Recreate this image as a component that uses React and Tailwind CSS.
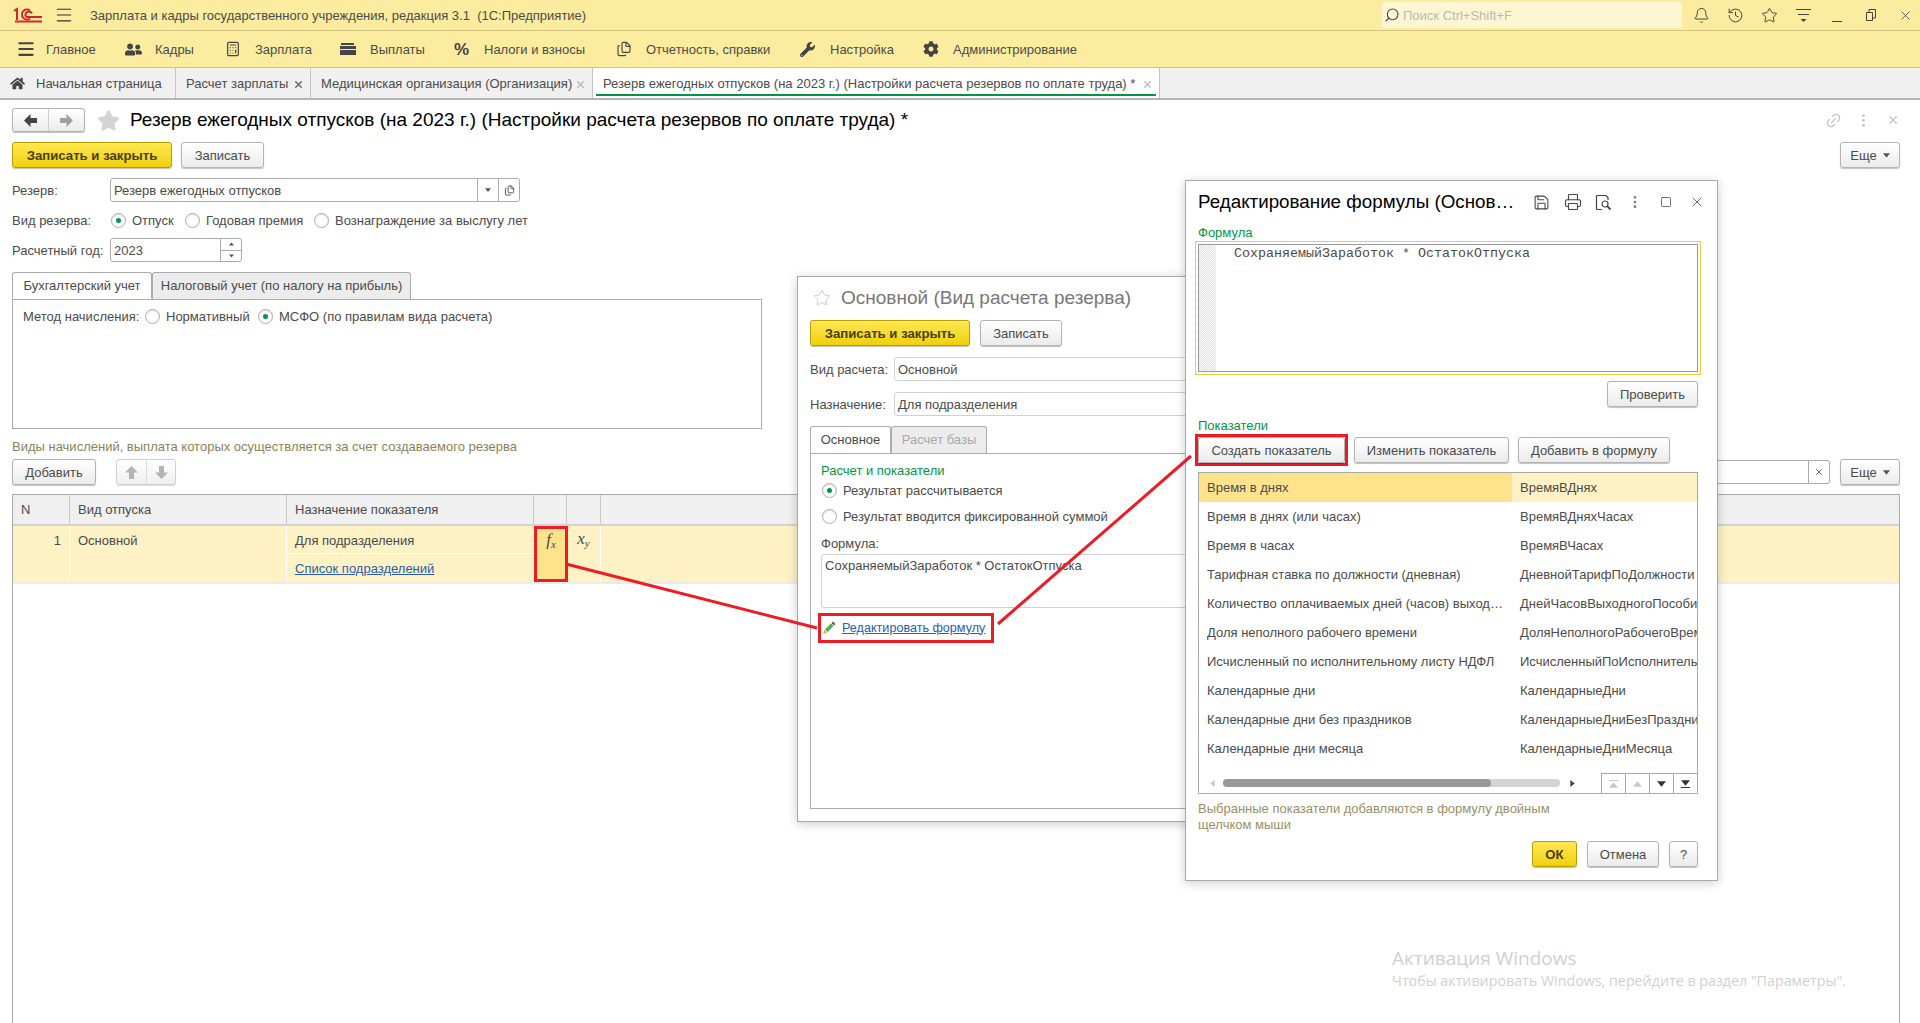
import React from 'react';
import {
    Bell, Calculator, Files, History, Link2, Menu, MoreVertical, Printer, Save, Search, Square, Star, X,
} from 'lucide-react';
import { FaCog, FaHome, FaStar, FaUserFriends, FaWrench } from 'react-icons/fa';

const navItems = [
    { label: 'Главное', width: 'w-[109px]', icon: <Menu size={20} strokeWidth={2.5} /> },
    { label: 'Кадры', width: 'w-[100px]', icon: <FaUserFriends size={17} /> },
    { label: 'Зарплата', width: 'w-[115px]', icon: <Calculator size={16} strokeWidth={1.8} /> },
    { label: 'Выплаты', width: 'w-[114px]', icon: <WalletIcon /> },
    { label: 'Налоги и взносы', width: 'w-[162px]', icon: <span className="text-[17px] font-bold leading-none">%</span> },
    { label: 'Отчетность, справки', width: 'w-[184px]', icon: <Files size={16} strokeWidth={1.7} /> },
    { label: 'Настройка', width: 'w-[123px]', icon: <FaWrench size={15} /> },
    { label: 'Администрирование', width: 'w-[160px]', icon: <FaCog size={16} /> },
];

const indicators = [
    ['Время в днях', 'ВремяВДнях'],
    ['Время в днях (или часах)', 'ВремяВДняхЧасах'],
    ['Время в часах', 'ВремяВЧасах'],
    ['Тарифная ставка по должности (дневная)', 'ДневнойТарифПоДолжности'],
    ['Количество оплачиваемых дней (часов) выходного пособия', 'ДнейЧасовВыходногоПособия'],
    ['Доля неполного рабочего времени', 'ДоляНеполногоРабочегоВремени'],
    ['Исчисленный по исполнительному листу НДФЛ', 'ИсчисленныйПоИсполнительномуЛисту'],
    ['Календарные дни', 'КалендарныеДни'],
    ['Календарные дни без праздников', 'КалендарныеДниБезПраздников'],
    ['Календарные дни месяца', 'КалендарныеДниМесяца'],
    ['Календарные дни года', 'КалендарныеДниГода'],
];

function WalletIcon() {
    return (
        <svg width="16" height="14" viewBox="0 0 16 14" fill="currentColor">
            <path d="M1 1h13v2H1zM0 4h16v3H0zM0 8h16v5H0z" />
        </svg>
    );
}

function Logo() {
    return (
        <svg width="30" height="16" viewBox="0 0 30 16" fill="none" stroke="#d8232a" strokeWidth="2">
            <path d="M1 4 L4 2 V13" />
            <path d="M17 3.5 A5 5 0 1 0 17 11.5" />
            <path d="M19 6.5 A3.5 3.5 0 0 0 13 6 A2.5 2.5 0 0 0 14 10 H29" />
            <path d="M2 14.5 H29" />
        </svg>
    );
}

function Pencil() {
    return (
        <svg width="14" height="14" viewBox="0 0 14 14">
            <path d="M3 8.5 L9 2.5 L11.5 5 L5.5 11 Z" fill="#4caf50" />
            <path d="M9.5 2 L11 0.5 L13.5 3 L12 4.5 Z" fill="#4a5a50" />
            <path d="M2.5 9 L5 11.5 L1 13 Z" fill="#e8a33d" />
        </svg>
    );
}

// жирная стрелка, как на кнопках 1С
function FatArrow({ dir, className }) {
    const rotate = { up: '', down: 'rotate-180', left: '-rotate-90', right: 'rotate-90' }[dir];
    return (
        <svg width="13" height="13" viewBox="0 0 13 13" fill="currentColor" className={`${rotate} ${className}`}>
            <path d="M6.5 0 L13 6.5 H9 V13 H4 V6.5 H0 Z" />
        </svg>
    );
}

function PreviewIcon() {
    return (
        <svg width="17" height="17" viewBox="0 0 17 17" fill="none" stroke="currentColor" strokeWidth="1.2">
            <path d="M7 15.5 H2.5 Q1.5 15.5 1.5 14.5 V2.5 Q1.5 1.5 2.5 1.5 H11 L13 3.5 V6" />
            <circle cx="10" cy="10" r="3" />
            <path d="M12.2 12.2 L15.5 15.5" strokeWidth="1.8" />
        </svg>
    );
}

function Caret({ up, className = 'text-[#555]', size = 7 }) {
    return (
        <svg width={size} height={Math.ceil(size / 2) + 1} viewBox="0 0 8 5" fill="currentColor" className={className}>
            <path d={up ? 'M0 5 L4 0 L8 5 Z' : 'M0 0 L8 0 L4 5 Z'} />
        </svg>
    );
}

function Btn({ children, w, primary }) {
    const look = primary
        ? 'bg-linear-to-b from-[#ffe84d] to-[#f0d000] border-[#b8a000] text-[#4a4000] font-bold text-[13.2px]'
        : 'bg-linear-to-b from-white to-[#ebebeb] border-[#b3b3b3] text-[#4b4b4b]';
    return (
        <div className={`${w} ${look} h-[26px] pt-px shrink-0 flex items-center justify-center rounded-[3px] border shadow-[0_1px_1px_rgba(0,0,0,0.25)]`}>
            {children}
        </div>
    );
}

function More() {
    return (
        <Btn w="w-[60px]">
            <span className="mr-1.5">Еще</span>
            <Caret />
        </Btn>
    );
}

function Radio({ on, label, className = '' }) {
    return (
        <div className={`flex items-center ${className}`}>
            <span className="w-[15px] h-[15px] shrink-0 rounded-full border border-[#ababab] bg-white flex items-center justify-center shadow-[inset_0_1px_1px_rgba(0,0,0,0.12)]">
                {on && <span className="w-[5px] h-[5px] rounded-full bg-[#009646]" />}
            </span>
            <span className="ml-1.5 pt-px whitespace-nowrap">{label}</span>
        </div>
    );
}

function TabHead({ active, children, w, muted }) {
    return (
        <div className={`${w} h-[27px] flex items-center justify-center rounded-t-[3px] border border-[#ababab] whitespace-nowrap ${active ? 'bg-white border-b-white -mb-px z-10' : 'bg-[#ececec] border-b-0'} ${muted ? 'text-[#a8a8a8]' : ''}`}>
            {children}
        </div>
    );
}

function TopTab({ w, children, close, active, icon }) {
    return (
        <div className={`${w} relative h-full pt-px flex items-center border-r border-[#c4c4c4] whitespace-nowrap ${active ? 'bg-white' : ''}`}>
            {icon}
            {children}
            {close && <X size={11} strokeWidth={3} className={`absolute right-[6px] top-[11px] ${close}`} />}
            {active && <div className="absolute left-[3px] right-[3px] bottom-[2px] h-[2px] bg-[#009646]" />}
        </div>
    );
}

function ReserveTable() {
    return (
        <div className="mt-[9px] flex-1 border border-b-0 border-[#a9a9a9]">
            <div className="grid grid-cols-[57px_217px_247px_33px_34px_1fr] h-[31px] bg-[#f0f0f0] border-b-2 border-[#d2d2d2]">
                <div className="px-2 flex items-center border-r border-[#c8c8c8]">N</div>
                <div className="px-2 flex items-center border-r border-[#c8c8c8]">Вид отпуска</div>
                <div className="px-2 flex items-center border-r border-[#c8c8c8]">Назначение показателя</div>
                <div className="border-r border-[#c8c8c8]" />
                <div className="border-r border-[#c8c8c8]" />
                <div />
            </div>
            <div className="grid grid-cols-[57px_217px_247px_33px_34px_1fr] h-[58px] bg-[#fef2c5] border-b-2 border-[#ebebeb]">
                <div className="pt-[5px] pr-[8px] text-right border-r border-white">1</div>
                <div className="pt-[5px] px-2 border-r border-white">Основной</div>
                <div className="flex flex-col">
                    <div className="h-[28px] pt-[2px] px-2 flex items-center border-b border-white">Для подразделения</div>
                    <div className="flex-1 pt-[2px] px-2 flex items-center text-[#2a5db0] underline">Список подразделений</div>
                </div>
                <div className="-mr-px border-[3px] border-[#ed1c24] bg-[#fee38d] text-center pt-[1px] font-['Liberation_Serif',serif] italic text-[17px] leading-5">
                    f<sub className="text-[11px]">x</sub>
                </div>
                <div className="text-center pt-[3px] border-r border-white font-['Liberation_Serif',serif] italic text-[17px] leading-5">
                    x<sub className="text-[11px]">y</sub>
                </div>
                <div />
            </div>
        </div>
    );
}

function MainForm() {
    return (
        <div className="flex-1 flex flex-col px-3 pr-5 pt-2">
            <div className="h-6 flex items-center">
                <div className="w-[73px] h-6 flex rounded-[3px] border border-[#b3b3b3] bg-linear-to-b from-white to-[#ebebeb] shadow-[0_1px_1px_rgba(0,0,0,0.25)]">
                    <div className="w-9 flex items-center justify-center border-r border-[#d0d0d0]"><FatArrow dir="left" className="text-[#444]" /></div>
                    <div className="flex-1 flex items-center justify-center"><FatArrow dir="right" className="text-[#a0a0a0]" /></div>
                </div>
                <FaStar size={23} className="ml-3 text-[#d4d4d4]" />
                <h1 className="ml-[10px] text-[19px] text-black whitespace-nowrap">
                    Резерв ежегодных отпусков (на 2023 г.) (Настройки расчета резервов по оплате труда) *
                </h1>
                <div className="ml-auto flex items-center text-[#c4c4c4]">
                    <Link2 size={17} className="-rotate-45" />
                    <MoreVertical size={17} className="ml-[13px]" />
                    <X size={14} className="ml-[14px]" />
                </div>
            </div>

            <div className="mt-[10px] flex gap-[9px]">
                <Btn w="w-[160px]" primary>Записать и закрыть</Btn>
                <Btn w="w-[83px]">Записать</Btn>
                <div className="ml-auto"><More /></div>
            </div>

            <div className="mt-[10px] h-6 flex items-center">
                <span className="w-[98px] pt-px">Резерв:</span>
                <div className="w-[410px] h-6 flex rounded-[3px] border border-[#ababab]">
                    <span className="flex-1 pl-[3px] pt-px flex items-center">Резерв ежегодных отпусков</span>
                    <span className="w-[21px] flex items-center justify-center border-l border-[#ababab]"><Caret size={6} /></span>
                    <span className="w-[21px] flex items-center justify-center border-l border-[#ababab]"><Files size={11} /></span>
                </div>
            </div>

            <div className="mt-[6px] h-6 flex items-center">
                <span className="w-[99px] pt-px">Вид резерва:</span>
                <Radio on label="Отпуск" className="w-[74px]" />
                <Radio label="Годовая премия" className="w-[129px]" />
                <Radio label="Вознаграждение за выслугу лет" />
            </div>

            <div className="mt-[6px] h-6 flex items-center">
                <span className="w-[98px] pt-px">Расчетный год:</span>
                <div className="w-[132px] h-6 flex rounded-[3px] border border-[#ababab]">
                    <span className="flex-1 pl-[3px] pt-px flex items-center">2023</span>
                    <span className="w-[21px] flex flex-col border-l border-[#ababab]">
                        <span className="flex-1 flex items-center justify-center border-b border-[#ababab]"><Caret up size={5} /></span>
                        <span className="flex-1 flex items-center justify-center"><Caret size={5} /></span>
                    </span>
                </div>
            </div>

            <div className="mt-[10px] flex">
                <TabHead active w="w-[140px]">Бухгалтерский учет</TabHead>
                <TabHead w="w-[259px]">Налоговый учет (по налогу на прибыль)</TabHead>
            </div>
            <div className="w-[750px] h-[130px] border border-[#ababab] px-[10px] pt-[7px]">
                <div className="flex items-center h-[18px]">
                    <span className="w-[122px] pt-px">Метод начисления:</span>
                    <Radio label="Нормативный" className="w-[113px]" />
                    <Radio on label="МСФО (по правилам вида расчета)" />
                </div>
            </div>

            <div className="mt-[10px] h-4 leading-4 text-[#8b8259]">Виды начислений, выплата которых осуществляется за счет создаваемого резерва</div>

            <div className="mt-[4px] flex items-center">
                <Btn w="w-[84px]">Добавить</Btn>
                <div className="ml-5 w-[60px] h-[26px] flex rounded-[3px] border border-[#d0d0d0] bg-linear-to-b from-white to-[#efefef] shadow-[0_1px_1px_rgba(0,0,0,0.15)]">
                    <span className="w-[30px] flex items-center justify-center border-r border-[#dcdcdc]"><FatArrow dir="up" className="text-[#b4b4b4]" /></span>
                    <span className="flex-1 flex items-center justify-center"><FatArrow dir="down" className="text-[#b4b4b4]" /></span>
                </div>
                <div className="ml-auto w-[300px] h-6 flex justify-end rounded-[3px] border border-[#ababab]">
                    <span className="w-[21px] flex items-center justify-center border-l border-[#ababab]"><X size={10} strokeWidth={2} /></span>
                </div>
                <div className="ml-[10px]"><More /></div>
            </div>

            <ReserveTable />
        </div>
    );
}

function CalcDialog() {
    return (
        <div className="absolute left-[797px] top-[276px] w-[420px] h-[546px] bg-white border border-[#a9a9a9] shadow-[0_2px_10px_rgba(0,0,0,0.2)] px-3">
            <div className="mt-[9px] h-6 flex items-center">
                <Star size={18} strokeWidth={1.3} className="ml-[3px] text-[#c8c8c8]" />
                <span className="ml-[10px] text-[19px] text-[#777] whitespace-nowrap">Основной (Вид расчета резерва)</span>
            </div>
            <div className="mt-[10px] flex gap-[10px]">
                <Btn w="w-[160px]" primary>Записать и закрыть</Btn>
                <Btn w="w-[82px]">Записать</Btn>
            </div>
            <div className="mt-[11px] h-6 flex items-center">
                <span className="w-[84px] pt-px whitespace-nowrap">Вид расчета:</span>
                <div className="flex-1 h-6 pl-[3px] pt-px flex items-center rounded-[3px] border border-[#d0d0d0]">Основной</div>
            </div>
            <div className="mt-[11px] h-6 flex items-center">
                <span className="w-[84px] pt-px">Назначение:</span>
                <div className="flex-1 h-6 pl-[3px] pt-px flex items-center rounded-[3px] border border-[#d0d0d0]">Для подразделения</div>
            </div>
            <div className="mt-[10px] flex">
                <TabHead active w="w-[81px]">Основное</TabHead>
                <TabHead muted w="w-[96px]">Расчет базы</TabHead>
            </div>
            <div className="h-[356px] border border-[#ababab] px-[10px]">
                <div className="mt-[9px] h-4 leading-4 text-[#009646]">Расчет и показатели</div>
                <Radio on label="Результат рассчитывается" className="mt-[2px] ml-px h-[18px]" />
                <Radio label="Результат вводится фиксированной суммой" className="mt-[8px] ml-px h-[18px]" />
                <div className="mt-[11px] h-4 leading-4">Формула:</div>
                <div className="mt-[2px] h-[54px] rounded-[3px] border border-[#d0d0d0] pl-[3px] pt-[1px] whitespace-nowrap">СохраняемыйЗаработок * ОстатокОтпуска</div>
                <div className="-ml-[3px] mt-[5px] w-[176px] h-[30px] border-[3px] border-[#ed1c24] flex items-center pl-px">
                    <Pencil />
                    <span className="ml-[6px] text-[12.6px] text-[#2a5db0] underline whitespace-nowrap">Редактировать формулу</span>
                </div>
            </div>
        </div>
    );
}

function FormulaDialog() {
    return (
        <div className="absolute left-[1185px] top-[180px] w-[533px] h-[701px] bg-white border border-[#a9a9a9] shadow-[0_2px_10px_rgba(0,0,0,0.2)] pl-3 pr-[19px]">
            <div className="mt-[9px] -mr-[14px] h-6 flex items-center">
                <span className="w-[328px] shrink-0 text-[18.8px] text-black whitespace-nowrap">Редактирование формулы (Основ…</span>
                <div className="flex items-center text-[#444]">
                    <span className="w-[31px] flex justify-center"><Save size={17} strokeWidth={1.5} /></span>
                    <span className="w-[31px] flex justify-center"><Printer size={18} strokeWidth={1.5} /></span>
                    <span className="w-[31px] flex justify-center"><PreviewIcon /></span>
                    <span className="w-[31px] flex justify-center text-[#777]"><MoreVertical size={16} /></span>
                    <span className="w-[31px] flex justify-center"><Square size={12} strokeWidth={1.5} /></span>
                    <span className="w-[31px] flex justify-center"><X size={16} strokeWidth={1.2} /></span>
                </div>
            </div>
            <div className="mt-[10px] h-4 pt-px leading-4 text-[#009646]">Формула</div>
            <div className="-mx-[3px] mt-[1px] h-[134px] border border-[#f2c94c] p-[2px]">
                <div className="h-full flex border border-[#9a9a9a]">
                    <div className="w-[17px] bg-[repeating-conic-gradient(#dcdcdc_0_25%,#ffffff_0_50%)] bg-[length:2px_2px]" />
                    <div className="pl-[18px] pt-px font-['Liberation_Mono',monospace] text-[13.33px] leading-4 whitespace-pre">СохраняемыйЗаработок * ОстатокОтпуска</div>
                </div>
            </div>
            <div className="mt-[6px] flex justify-end"><Btn w="w-[91px]">Проверить</Btn></div>
            <div className="mt-[10px] h-4 pt-px leading-4 text-[#009646]">Показатели</div>
            <div className="mt-[4px] flex">
                <div className="-ml-[3px] -my-[3px] w-[153px] h-[32px] border-[3px] border-[#ed1c24] shrink-0"><Btn w="w-full">Создать показатель</Btn></div>
                <div className="ml-[6px]"><Btn w="w-[155px]">Изменить показатель</Btn></div>
                <div className="ml-[9px]"><Btn w="w-[152px]">Добавить в формулу</Btn></div>
            </div>
            <div className="mt-[9px] h-[322px] border border-[#a9a9a9] flex flex-col">
                <div className="flex-1 overflow-hidden">
                    {indicators.map(([name, code], i) => (
                        <div key={code} className="h-[29px] flex items-center">
                            <div className={`w-[313px] h-full pl-2 pr-[6px] flex items-center ${i === 0 ? 'bg-[#fee38d]' : ''}`}>
                                <span className="truncate">{name}</span>
                            </div>
                            <div className={`flex-1 h-full pl-2 flex items-center overflow-hidden whitespace-nowrap ${i === 0 ? 'bg-[#fef2c5]' : ''}`}>{code}</div>
                        </div>
                    ))}
                </div>
                <div className="h-[20px] flex items-center bg-white">
                    <Caret up className="ml-[10px] -rotate-90 text-[#c8c8c8]" size={7} />
                    <div className="ml-[7px] w-[337px] h-2 rounded-full bg-[#d4d4d4]">
                        <div className="w-[268px] h-2 rounded-full bg-[#999]" />
                    </div>
                    <Caret className="ml-[9px] -rotate-90 text-[#444]" size={7} />
                    <div className="ml-auto flex self-stretch border-t border-[#a9a9a9]">
                        <span className="w-6 flex flex-col items-center justify-center border-l border-[#a9a9a9]"><span className="w-[9px] h-px bg-[#c8c8c8] mb-px" /><Caret up size={9} className="text-[#c8c8c8]" /></span>
                        <span className="w-6 flex items-center justify-center border-l border-[#a9a9a9]"><Caret up size={9} className="text-[#c8c8c8]" /></span>
                        <span className="w-6 flex items-center justify-center border-l border-[#a9a9a9]"><Caret size={9} className="text-[#333]" /></span>
                        <span className="w-6 flex flex-col items-center justify-center border-l border-[#a9a9a9]"><Caret size={9} className="text-[#333]" /><span className="w-[9px] h-px bg-[#333] mt-px" /></span>
                    </div>
                </div>
            </div>
            <div className="mt-[7px] leading-4 text-[#9a8f63] w-[400px]">Выбранные показатели добавляются в формулу двойным щелчком мыши</div>
            <div className="mt-[8px] flex justify-end">
                <Btn w="w-[45px]" primary>ОК</Btn>
                <div className="ml-[10px]"><Btn w="w-[72px]">Отмена</Btn></div>
                <div className="ml-[10px]"><Btn w="w-[29px]">?</Btn></div>
            </div>
        </div>
    );
}

export default function App() {
    return (
        <div className="relative w-[1920px] h-[1023px] overflow-hidden bg-white flex flex-col font-['Liberation_Sans',Arial,sans-serif] text-[13px] text-[#4b4b4b]">
            {/* Заголовок */}
            <div className="h-[31px] shrink-0 bg-[#fbec9f] border-b border-[#d3c37f] flex items-center">
                <div className="ml-[13px] w-[30px]"><Logo /></div>
                <Menu size={20} strokeWidth={1.3} className="ml-[11px] text-[#333]" />
                <span className="ml-4 pt-px whitespace-pre">Зарплата и кадры государственного учреждения, редакция 3.1  (1С:Предприятие)</span>
                <div className="ml-auto w-[300px] h-[26px] mr-[2px] rounded-[2px] bg-[#fdf6d2] flex items-center pl-[2px] text-[#b9b9b9]">
                    <Search size={16} strokeWidth={1.6} className="text-[#444] -scale-x-100" />
                    <span className="ml-[3px] pt-px">Поиск Ctrl+Shift+F</span>
                </div>
                <div className="flex items-center shrink-0 -mr-[2px] text-[#444]">
                    <span className="w-[34px] flex justify-center"><Bell size={17} strokeWidth={1.4} /></span>
                    <span className="w-[34px] flex justify-center"><History size={17} strokeWidth={1.4} /></span>
                    <span className="w-[34px] flex justify-center"><Star size={17} strokeWidth={1.4} /></span>
                    <span className="w-[34px] flex justify-center">
                        <svg width="15" height="16" viewBox="0 0 15 16" stroke="currentColor"><path d="M0 2.5h15M2 7.5h11" /><path d="M4.5 12h6l-3 3z" fill="currentColor" stroke="none" /></svg>
                    </span>
                    <span className="w-[34px] flex justify-center">
                        <svg width="10" height="16" viewBox="0 0 10 16" stroke="currentColor"><path d="M0 14.5h10" /></svg>
                    </span>
                    <span className="w-[34px] flex justify-center">
                        <svg width="10" height="12" viewBox="0 0 10 12" fill="none" stroke="currentColor"><path d="M.5 3.5h6v8h-6zM3 3V.5h6.5V9H7" /></svg>
                    </span>
                    <span className="w-[34px] flex justify-center"><X size={15} strokeWidth={1.3} /></span>
                </div>
            </div>

            {/* Разделы */}
            <div className="h-[37px] shrink-0 bg-[#fbec9f] border-b border-[#d3c37f] flex items-center pl-[16px]">
                {navItems.map((item) => (
                    <div key={item.label} className={`${item.width} flex items-center shrink-0`}>
                        <span className="w-[30px] flex text-[#444]">{item.icon}</span>
                        <span className="pt-[2px] whitespace-nowrap">{item.label}</span>
                    </div>
                ))}
            </div>

            {/* Открытые окна */}
            <div className="h-[32px] shrink-0 bg-[#f0f0f0] border-b-2 border-[#b4b4b4] flex">
                <TopTab w="w-[176px]" icon={<FaHome size={15} className="ml-[10px] mr-[11px] text-[#444]" />}>Начальная страница</TopTab>
                <TopTab w="w-[135px]" close="text-[#666]"><span className="ml-[10px]">Расчет зарплаты</span></TopTab>
                <TopTab w="w-[282px]" close="text-[#bbb]"><span className="ml-[10px]">Медицинская организация (Организация)</span></TopTab>
                <TopTab w="w-[567px]" close="text-[#bbb]" active><span className="ml-[10px]">Резерв ежегодных отпусков (на 2023 г.) (Настройки расчета резервов по оплате труда) *</span></TopTab>
            </div>

            <MainForm />
            <CalcDialog />
            <FormulaDialog />

            {/* Стрелки-выноски */}
            <svg className="absolute inset-0 pointer-events-none" width="1920" height="1023" fill="none" stroke="#ed1c24" strokeWidth="3">
                <path d="M566 564 L817 628" />
                <path d="M998 624 L1191 456" />
            </svg>

            {/* Водяной знак */}
            <div className="absolute left-[1392px] top-[945px] pointer-events-none font-['Open_Sans',sans-serif] text-[#d0d0d0]">
                <div className="text-[19px] leading-[26px] whitespace-nowrap">Активация Windows</div>
                <div className="text-[14.27px] leading-[20px] whitespace-nowrap">Чтобы активировать Windows, перейдите в раздел "Параметры".</div>
            </div>
        </div>
    );
}
